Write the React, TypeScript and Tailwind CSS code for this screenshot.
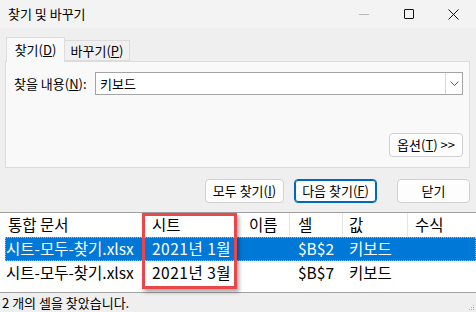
import React from "react";

const rows = [
  { book: "시트-모두-찾기.xlsx", sheet: "2021년 1월", cell: "$B$2", value: "키보드", selected: true },
  { book: "시트-모두-찾기.xlsx", sheet: "2021년 3월", cell: "$B$7", value: "키보드", selected: false },
];

function Btn({ children, primary, className }: { children: React.ReactNode; primary?: boolean; className?: string }) {
  return (
    <button
      className={`h-[24px] rounded-[4px] bg-[#fdfdfd] text-[13px] text-black flex items-center justify-center ${
        primary ? "border border-[#0067c0] shadow-[inset_0_0_0_1px_#0067c0]" : "border border-[#d0d0d0]"
      } ${className ?? ""}`}
    >
      {children}
    </button>
  );
}

export default function App() {
  return (
    <div
      className="w-[476px] h-[312px] bg-[#efefef] flex flex-col overflow-hidden relative text-black"
      style={{ fontFamily: '"Noto Sans CJK KR", "Noto Sans", sans-serif' }}
    >
      {/* title bar */}
      <div className="h-[28px] bg-[#f3f3f3] flex items-center shrink-0">
        <span className="pl-[8px] text-[13px]">찾기 및 바꾸기</span>
        <div className="ml-auto flex h-full">
          <div className="w-[45px] flex items-center justify-center">
            <div className="w-[10px] h-px bg-[#b5b5b5]" />
          </div>
          <div className="w-[45px] flex items-center justify-center">
            <div className="w-[10px] h-[10px] border border-[#111] rounded-[1px]" />
          </div>
          <div className="w-[45px] flex items-center justify-center">
            <svg width="11" height="11" viewBox="0 0 11 11">
              <path d="M0.5 0.5L10.5 10.5M10.5 0.5L0.5 10.5" stroke="#111" strokeWidth="1" />
            </svg>
          </div>
        </div>
      </div>

      {/* tabs */}
      <div className="flex items-end px-[6px] pt-[9px] shrink-0 relative z-10">
        <div className="w-[59px] h-[25px] bg-[#f9f9f9] border border-b-0 border-[#dcdcdc] text-[13px] flex items-center justify-center -mb-px">
          찾기(<span className="underline">D</span>)
        </div>
        <div className="w-[65px] h-[21px] bg-[#f0f0f0] border border-l-0 border-[#dcdcdc] text-[13px] flex items-center justify-center">
          바꾸기(<span className="underline">P</span>)
        </div>
      </div>

      {/* tab panel */}
      <div className="mx-[5px] w-[465px] h-[107px] bg-[#f9f9f9] border border-[#dcdcdc] shrink-0 flex flex-col">
        <div className="flex items-center mt-[10px]">
          <span className="pl-[8px] w-[89px] text-[13px] whitespace-nowrap">
            찾을 내용(<span className="underline">N</span>):
          </span>
          <div className="w-[368px] h-[23px] bg-white border border-[#a4a4a4] flex items-center">
            <span className="pl-[4px] text-[13px] flex-1">키보드</span>
            <div className="w-[17px] h-full border-l border-[#d8d8d8] flex items-center justify-center">
              <svg width="9" height="5" viewBox="0 0 9 5">
                <path d="M0.5 0.5L4.5 4.5L8.5 0.5" stroke="#666" fill="none" strokeWidth="1" />
              </svg>
            </div>
          </div>
        </div>
        <div className="flex justify-end mt-[38px] pr-[6px]">
          <Btn className="w-[74px]">
            옵션(<span className="underline">T</span>) &gt;&gt;
          </Btn>
        </div>
      </div>

      {/* action buttons */}
      <div className="flex justify-end gap-[10px] pr-[6px] mt-[11px] shrink-0">
        <Btn className="w-[79px]">
          모두 찾기(<span className="underline">I</span>)
        </Btn>
        <Btn primary className="w-[83px] mr-[10px]">
          다음 찾기(<span className="underline">F</span>)
        </Btn>
        <Btn className="w-[73px]">닫기</Btn>
      </div>

      {/* results table */}
      <div className="mt-[9px] h-[81px] bg-white border-t border-b border-[#a0a0a0] shrink-0 text-[15.5px] relative">
        <div className="grid grid-cols-[143px_94px_53px_53px_65px_1fr] h-[24px] items-center">
          <div className="pl-[8px]">통합 문서</div>
          <div className="pl-[9px] h-full flex items-center border-r border-[#e5e5e5]">시트</div>
          <div className="pl-[12px] h-full flex items-center border-r border-[#e5e5e5]">이름</div>
          <div className="pl-[8px] h-full flex items-center border-r border-[#e5e5e5]">셀</div>
          <div className="pl-[6px] h-full flex items-center border-r border-[#e5e5e5]">값</div>
          <div className="pl-[7px]">수식</div>
        </div>
        {rows.map((r, i) => (
          <div
            key={i}
            className={`ml-[5px] grid grid-cols-[138px_94px_53px_53px_65px_1fr] h-[24px] items-center ${
              r.selected ? "bg-[#0078d7] text-white outline-1 outline-dotted outline-[#f2a65a] -outline-offset-1" : ""
            }`}
          >
            <div className="pl-[1px] whitespace-nowrap">{r.book}</div>
            <div className="pl-[9px] whitespace-nowrap tracking-[0.5px]">{r.sheet}</div>
            <div />
            <div className="pl-[8px]">{r.cell}</div>
            <div className="pl-[6px]">{r.value}</div>
            <div />
          </div>
        ))}

        {/* highlight box */}
        <div className="absolute left-[142px] top-0 w-[95px] h-[76px] border-[3px] border-[#e8474b] shadow-[2px_3px_4px_rgba(0,0,0,0.35)] pointer-events-none" />
      </div>

      {/* status bar */}
      <div className="flex-1 flex items-center pl-[2px] text-[13px]">2 개의 셀을 찾았습니다.</div>
      <div className="absolute right-[2px] bottom-[2px] grid grid-cols-3 gap-px">
        {[0, 0, 1, 0, 1, 1, 1, 1, 1].map((v, i) => (
          <div key={i} className={`w-[1px] h-[1px] ${v ? "bg-[#b0b0b0]" : ""}`} />
        ))}
      </div>
    </div>
  );
}
